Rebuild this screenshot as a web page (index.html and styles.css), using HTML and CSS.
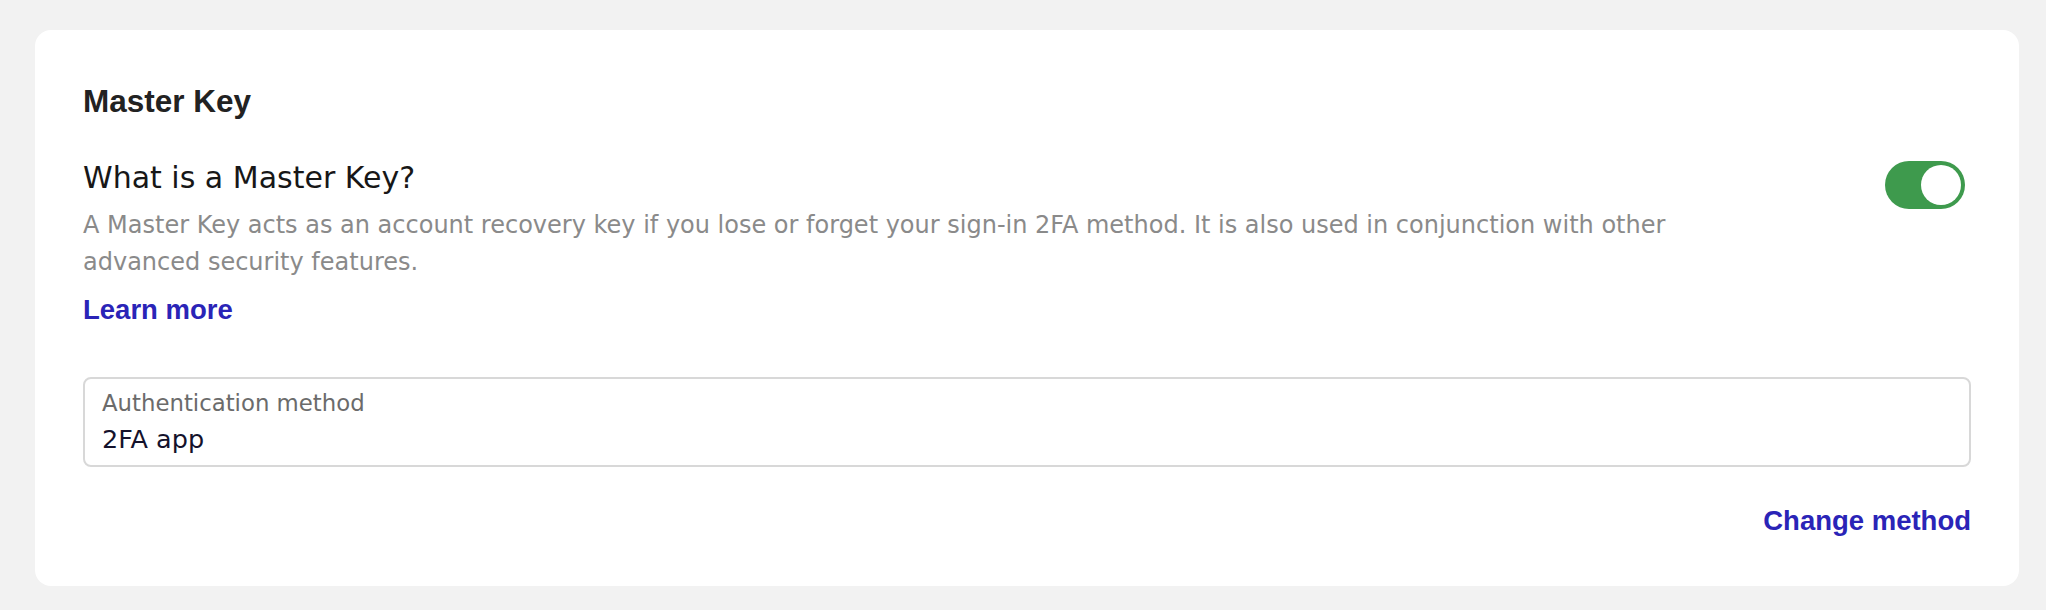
FILE: index.html
```html
<!DOCTYPE html>
<html lang="en">
<head>
<meta charset="utf-8">
<title>Master Key</title>
<link rel="stylesheet" href="styles.css">
</head>
<body>
  <section class="card">
    <h2 class="card-title">Master Key</h2>
    <div class="setting-row">
      <div class="setting-text">
        <h3 class="setting-question">What is a Master Key?</h3>
        <p class="setting-desc">A Master Key acts as an account recovery key if you lose or forget your sign-in 2FA method. It is also used in conjunction with other advanced security features.</p>
        <a class="link learn-more" href="#">Learn more</a>
      </div>
      <button class="toggle is-on" type="button" aria-pressed="true" aria-label="Master Key enabled">
        <span class="toggle-knob"></span>
      </button>
    </div>
    <div class="field">
      <div class="field-label">Authentication method</div>
      <div class="field-value">2FA app</div>
    </div>
    <div class="card-footer">
      <a class="link change-method" href="#">Change method</a>
    </div>
  </section>
</body>
</html>
```

FILE: styles.css
```css
* {
  box-sizing: border-box;
}

html, body {
  margin: 0;
  background: #f2f2f2;
}

body {
  padding: 30px 27px 0 35px;
  font-family: "DejaVu Sans", "Liberation Sans", sans-serif;
}

.card {
  background: #ffffff;
  border-radius: 16px;
  padding: 51px 48px 47px 48px;
}

.card-title {
  margin: 0 0 37px 0;
  font-family: "Liberation Sans", Arial, sans-serif;
  font-weight: 700;
  font-size: 31.5px;
  line-height: 40px;
  color: #222222;
}

.setting-row {
  display: flex;
  align-items: flex-start;
  justify-content: space-between;
}

.setting-text {
  flex: 1;
  max-width: 1650px;
}

.setting-question {
  margin: 0 0 9px 0;
  font-weight: 400;
  font-size: 30px;
  line-height: 40px;
  color: #171717;
}

.setting-desc {
  margin: 0 0 11px 0;
  font-size: 24px;
  line-height: 37px;
  color: #8a8a8a;
}

.link {
  font-family: "Liberation Sans", Arial, sans-serif;
  font-weight: 700;
  font-size: 27.5px;
  line-height: 36px;
  color: #2a24b7;
  text-decoration: none;
}

.learn-more {
  display: inline-block;
}

.toggle {
  flex: none;
  width: 80px;
  height: 48px;
  margin: 3px 6px 0 0;
  padding: 4px;
  border: none;
  border-radius: 24px;
  background: #3e9a4d;
  display: flex;
  justify-content: flex-end;
  align-items: center;
  cursor: pointer;
}

.toggle-knob {
  width: 40px;
  height: 40px;
  border-radius: 50%;
  background: #ffffff;
}

.field {
  margin-top: 49px;
  height: 90px;
  border: 2px solid #d8d8d8;
  border-radius: 8px;
  padding: 9px 16px 0 17px;
}

.field-label {
  font-size: 22.8px;
  line-height: 30px;
  color: #6b6b6b;
  margin-bottom: 4px;
}

.field-value {
  font-size: 25.5px;
  line-height: 34px;
  color: #14122c;
}

.card-footer {
  margin-top: 36px;
  display: flex;
  justify-content: flex-end;
}

.change-method {
  display: inline-block;
}
```
